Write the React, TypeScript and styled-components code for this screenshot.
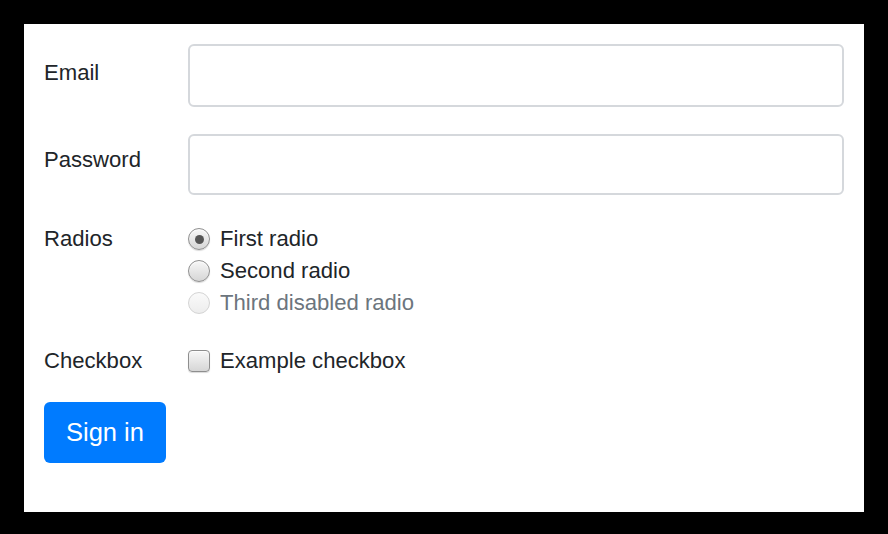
import React from "react";
import styled, { createGlobalStyle } from "styled-components";

const Global = createGlobalStyle`
  html, body { margin: 0; padding: 0; background: #000; }
  body { font-family: "Liberation Sans", Arial, Helvetica, sans-serif; color: #212529; }
  * { box-sizing: border-box; }
`;

const Page = styled.div`
  width: 888px;
  height: 534px;
  padding: 24px;
  background: #000;
`;

const Panel = styled.form`
  width: 840px;
  height: 488px;
  background: #fff;
  padding: 20px;
  display: flex;
  flex-direction: column;
`;

const Row = styled.div<{ $mb: number }>`
  display: grid;
  grid-template-columns: 144px 1fr;
  margin-bottom: ${(p) => p.$mb}px;
`;

const Label = styled.label<{ $pt: number }>`
  font-size: 22.1px;
  line-height: 32px;
  padding-top: ${(p) => p.$pt}px;
`;

const TextInput = styled.input<{ $h: number }>`
  height: ${(p) => p.$h}px;
  width: 100%;
  border: 2px solid #d5d8dc;
  border-radius: 6px;
  background: #fff;
  font: inherit;
  font-size: 22px;
  padding: 0 16px;
  outline: none;
`;

const Options = styled.div`
  display: flex;
  flex-direction: column;
`;

const Option = styled.label<{ $disabled?: boolean }>`
  display: flex;
  align-items: center;
  gap: 10px;
  font-size: 22.1px;
  line-height: 32px;
  height: 32px;
  color: ${(p) => (p.$disabled ? "#6c757d" : "#212529")};
`;

const Radio = styled.input.attrs({ type: "radio" })`
  appearance: none;
  -webkit-appearance: none;
  margin: 0;
  width: 22px;
  height: 22px;
  border-radius: 50%;
  border: 1px solid #909090;
  background: linear-gradient(#f7f7f7, #d6d6d6);
  box-shadow: inset 0 1px 1px rgba(255, 255, 255, 0.8), 0 1px 1px rgba(0, 0, 0, 0.15);
  position: relative;
  flex: none;

  &:checked::after {
    content: "";
    position: absolute;
    left: 50%;
    top: 50%;
    width: 9px;
    height: 9px;
    margin: -4.5px 0 0 -4.5px;
    border-radius: 50%;
    background: #555;
  }

  &:disabled {
    border-color: #d4d4d4;
    background: linear-gradient(#fafafa, #ededed);
    box-shadow: none;
  }
`;

const Checkbox = styled.input.attrs({ type: "checkbox" })`
  appearance: none;
  -webkit-appearance: none;
  margin: 0;
  width: 22px;
  height: 22px;
  border-radius: 4px;
  border: 1px solid #8e8e8e;
  background: linear-gradient(#f7f7f7, #d6d6d6);
  box-shadow: inset 0 1px 1px rgba(255, 255, 255, 0.8), 0 1px 1px rgba(0, 0, 0, 0.15);
  flex: none;
`;

const Button = styled.button`
  width: 122px;
  height: 61px;
  border: none;
  border-radius: 6px;
  background: #007bff;
  color: #fff;
  font-family: "Liberation Sans", Arial, Helvetica, sans-serif;
  font-size: 25.5px;
  padding: 0;
  cursor: pointer;
`;

export default function App() {
  return (
    <Page>
      <Global />
      <Panel onSubmit={(e) => e.preventDefault()}>
        <Row $mb={27}>
          <Label $pt={13} htmlFor="email">Email</Label>
          <TextInput $h={63} id="email" type="email" />
        </Row>
        <Row $mb={28}>
          <Label $pt={10} htmlFor="password">Password</Label>
          <TextInput $h={61} id="password" type="password" />
        </Row>
        <Row $mb={26}>
          <Label $pt={0}>Radios</Label>
          <Options>
            <Option>
              <Radio name="radios" defaultChecked />
              First radio
            </Option>
            <Option>
              <Radio name="radios" />
              Second radio
            </Option>
            <Option $disabled>
              <Radio name="radios" disabled />
              Third disabled radio
            </Option>
          </Options>
        </Row>
        <Row $mb={25}>
          <Label $pt={0}>Checkbox</Label>
          <Options>
            <Option>
              <Checkbox />
              Example checkbox
            </Option>
          </Options>
        </Row>
        <div>
          <Button type="submit">Sign in</Button>
        </div>
      </Panel>
    </Page>
  );
}
